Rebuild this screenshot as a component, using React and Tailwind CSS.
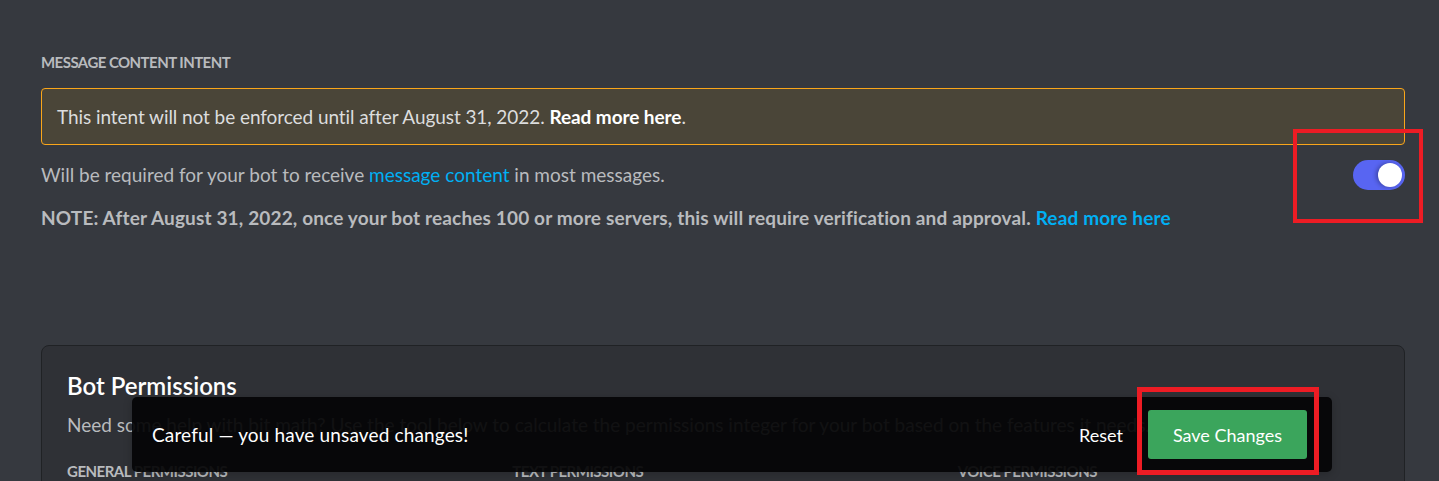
export default function App() {
  const font = { fontFamily: "Lato, 'Open Sans', sans-serif" };
  return (
    <div className="relative h-[481px] w-[1439px] overflow-hidden bg-[#36393f]" style={font}>
      <div className="pl-[41px] pr-[34px] pt-[52px]">
        <h2 className="text-[15px] font-bold leading-[20px] tracking-[-0.55px] uppercase text-[#b9bbbe]">Message Content Intent</h2>
        <div className="mt-[16px] flex h-[57px] items-center rounded-[4px] border border-[#faa61a] bg-[#4a4538] px-[15px]">
          <p className="text-[19px] leading-[24px] tracking-[-0.07px] text-[#dcddde]">
            This intent will not be enforced until after August 31, 2022. <span className="font-bold text-white">Read more here</span>.
          </p>
        </div>
        <div className="mt-[15px] flex h-[30px] items-center justify-between">
          <p className="text-[19px] leading-[24px] text-[#b9bbbe]">
            Will be required for your bot to receive <span className="text-[#00b0f4]">message content</span> in most messages.
          </p>
          <div className="flex h-[30px] w-[52px] items-center justify-end rounded-full bg-[#5865f2] pr-[3px]">
            <div className="h-[24px] w-[24px] rounded-full bg-white shadow-[-2px_0_4px_rgba(0,0,0,0.3)]" />
          </div>
        </div>
        <p className="mt-[16px] text-[19px] font-bold leading-[24px] tracking-[0.15px] text-[#b9bbbe]">
          NOTE: After August 31, 2022, once your bot reaches 100 or more servers, this will require verification and approval. <span className="text-[#00b0f4]">Read more here</span>
        </p>
        <div className="mt-[115px] rounded-[8px] border border-[#202225] bg-[#2f3136] px-[25px] pt-[25px] pb-[40px]">
          <h3 className="text-[24px] font-semibold leading-[30px] text-white">Bot Permissions</h3>
          <p className="mt-[12px] text-[19px] leading-[24px] text-[#b9bbbe]">
            Need some help with bit math? Use the tool below to calculate the permissions integer for your bot based on the features it needs.
          </p>
          <div className="mt-[24px] grid grid-cols-3 gap-[24px]">
            <h4 className="text-[15px] font-bold leading-[20px] tracking-[-0.5px] uppercase text-[#b9bbbe]">General Permissions</h4>
            <h4 className="text-[15px] font-bold leading-[20px] tracking-[-0.5px] uppercase text-[#b9bbbe]">Text Permissions</h4>
            <h4 className="text-[15px] font-bold leading-[20px] tracking-[-0.5px] uppercase text-[#b9bbbe]">Voice Permissions</h4>
          </div>
        </div>
      </div>

      <div className="absolute left-[132px] top-[397px] flex h-[75px] w-[1200px] items-center justify-between rounded-[5px] bg-[rgba(4,4,5,0.93)] pl-[20px] pr-[25px] shadow-[0_2px_10px_rgba(0,0,0,0.2)]">
        <span className="text-[19px] leading-[24px] tracking-[0.15px] text-white">Careful — you have unsaved changes!</span>
        <div className="flex items-center gap-[25px]">
          <button className="text-[18px] leading-[24px] text-white">Reset</button>
          <button className="flex h-[49px] w-[159px] items-center justify-center rounded-[3px] bg-[#3ba55c] text-[18px] leading-[24px] text-white">Save Changes</button>
        </div>
      </div>

      <div className="pointer-events-none absolute left-[1293px] top-[129px] h-[94px] w-[130px] border-[4px] border-[#ed1c24]" />
      <div className="pointer-events-none absolute left-[1137px] top-[387px] h-[88px] w-[182px] border-[5px] border-[#ed1c24]" />
    </div>
  );
}
